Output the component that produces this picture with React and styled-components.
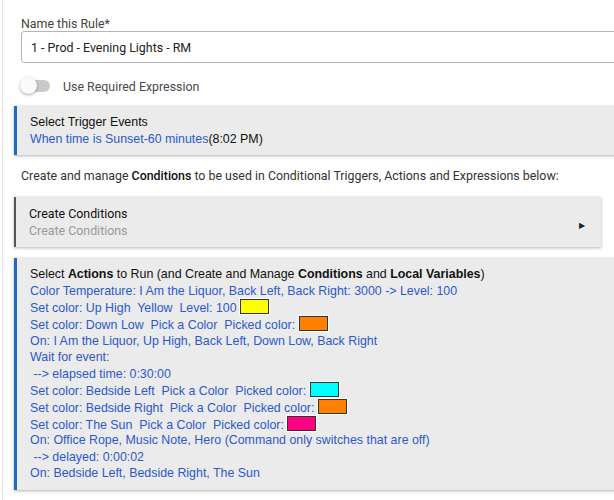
import styled, { createGlobalStyle } from 'styled-components';

const GlobalStyle = createGlobalStyle`
  html, body {
    margin: 0;
    padding: 0;
    background: #fff;
    overflow: hidden;
  }
  body {
    font-family: Roboto, "Liberation Sans", Arial, sans-serif;
  }
`;

const actions = [
  { text: 'Color Temperature: I Am the Liquor, Back Left, Back Right: 3000 -> Level: 100' },
  { text: 'Set color: Up High  Yellow  Level: 100 ', swatch: '#ffff00' },
  { text: 'Set color: Down Low  Pick a Color  Picked color: ', swatch: '#ff8000' },
  { text: 'On: I Am the Liquor, Up High, Back Left, Down Low, Back Right' },
  { text: 'Wait for event:' },
  { text: ' --> elapsed time: 0:30:00' },
  { text: 'Set color: Bedside Left  Pick a Color  Picked color: ', swatch: '#00ffff' },
  { text: 'Set color: Bedside Right  Pick a Color  Picked color: ', swatch: '#ff8000' },
  { text: 'Set color: The Sun  Pick a Color  Picked color: ', swatch: '#ff0080' },
  { text: 'On: Office Rope, Music Note, Hero (Command only switches that are off)' },
  { text: ' --> delayed: 0:00:02' },
  { text: 'On: Bedside Left, Bedside Right, The Sun' },
];

export default function App() {
  return (
    <>
      <GlobalStyle />
      <Page>
        <Field>
          <Label>Name this Rule*</Label>
          <Input>1 - Prod - Evening Lights - RM</Input>
        </Field>

        <ToggleRow>
          <Switch>
            <Knob />
          </Switch>
          <ToggleLabel>Use Required Expression</ToggleLabel>
        </ToggleRow>

        <Panel $accent="#1a6dc4">
          <Line>Select Trigger Events</Line>
          <Line>
            <Link>When time is Sunset-60 minutes</Link>(8:02 PM)
          </Line>
        </Panel>

        <Note>
          Create and manage <b>Conditions</b> to be used in Conditional Triggers, Actions and Expressions below:
        </Note>

        <Collapsed>
          <div>
            <CollapsedTitle>Create Conditions</CollapsedTitle>
            <CollapsedSub>Create Conditions</CollapsedSub>
          </div>
          <Arrow>&#9654;</Arrow>
        </Collapsed>

        <Panel $accent="#1a6dc4">
          <Line>
            Select <b>Actions</b> to Run (and Create and Manage <b>Conditions</b> and <b>Local Variables</b>)
          </Line>
          {actions.map((a, i) => (
            <Line key={i} $blue>
              {a.text}
              {a.swatch && <Swatch $color={a.swatch} />}
            </Line>
          ))}
        </Panel>
      </Page>
    </>
  );
}

const Page = styled.div`
  margin-left: 2px;
  border-left: 1px solid #e4e4e4;
  width: 680px;
  min-height: 500px;
  padding: 17px 0 0 11px;
  box-sizing: border-box;
`;

const Field = styled.div`
  display: flex;
  flex-direction: column;
  padding-left: 7px;
`;

const Label = styled.label`
  font-size: 12.4px;
  color: #444;
  line-height: 14px;
`;

const Input = styled.div`
  height: 32px;
  box-sizing: border-box;
  border: 1px solid #b5b5b5;
  border-radius: 3px;
  padding: 0 9px;
  display: flex;
  align-items: center;
  font-size: 12.4px;
  color: #222;
`;

const ToggleRow = styled.div`
  display: flex;
  align-items: center;
  gap: 13px;
  margin: 14px 0 0 6px;
  height: 18px;
`;

const Switch = styled.div`
  position: relative;
  width: 28px;
  height: 12px;
  border-radius: 6px;
  background: #c9c9c9;
  margin-left: 2px;
`;

const Knob = styled.span`
  position: absolute;
  left: -2px;
  top: -3px;
  width: 17px;
  height: 17px;
  border-radius: 50%;
  background: #fafafa;
  box-shadow: 0 1px 3px rgba(0, 0, 0, 0.35);
`;

const ToggleLabel = styled.span`
  font-size: 12.4px;
  color: #4a4a4a;
`;

const Panel = styled.div`
  margin-top: 11px;
  background: #ebebeb;
  border-left: 3px solid ${({ $accent }) => $accent};
  box-shadow: 0 1px 3px rgba(0, 0, 0, 0.3);
  padding: 8px 0 8px 13px;
  font-family: "Liberation Sans", Arial, sans-serif;
  font-size: 12.4px;
`;

const Line = styled.div`
  line-height: 16.6px;
  height: 16.6px;
  white-space: pre;
  color: ${({ $blue }) => ($blue ? '#2d58cf' : '#111')};
`;

const Link = styled.span`
  color: #2d58cf;
`;

const Swatch = styled.span`
  display: inline-block;
  width: 27px;
  height: 13px;
  vertical-align: -2px;
  background: ${({ $color }) => $color};
  border: 1px solid #333;
  outline: 1px solid #fff;
`;

const Note = styled.p`
  margin: 13px 0 0 7px;
  font-size: 12.4px;
  color: #333;
  line-height: 16px;

  b {
    color: #111;
    font-weight: 500;
  }
`;

const Collapsed = styled.div`
  margin-top: 13px;
  width: 587px;
  box-sizing: border-box;
  display: flex;
  align-items: center;
  justify-content: space-between;
  background: #ebebeb;
  border-left: 2px solid #555;
  box-shadow: 0 1px 3px rgba(0, 0, 0, 0.3);
  padding: 8px 16px 8px 13px;
`;

const CollapsedTitle = styled.div`
  font-size: 12.4px;
  line-height: 17px;
  color: #111;
`;

const CollapsedSub = styled.div`
  font-size: 12.4px;
  line-height: 17px;
  color: #999;
`;

const Arrow = styled.span`
  font-size: 8px;
  color: #222;
  margin-top: 7px;
`;
